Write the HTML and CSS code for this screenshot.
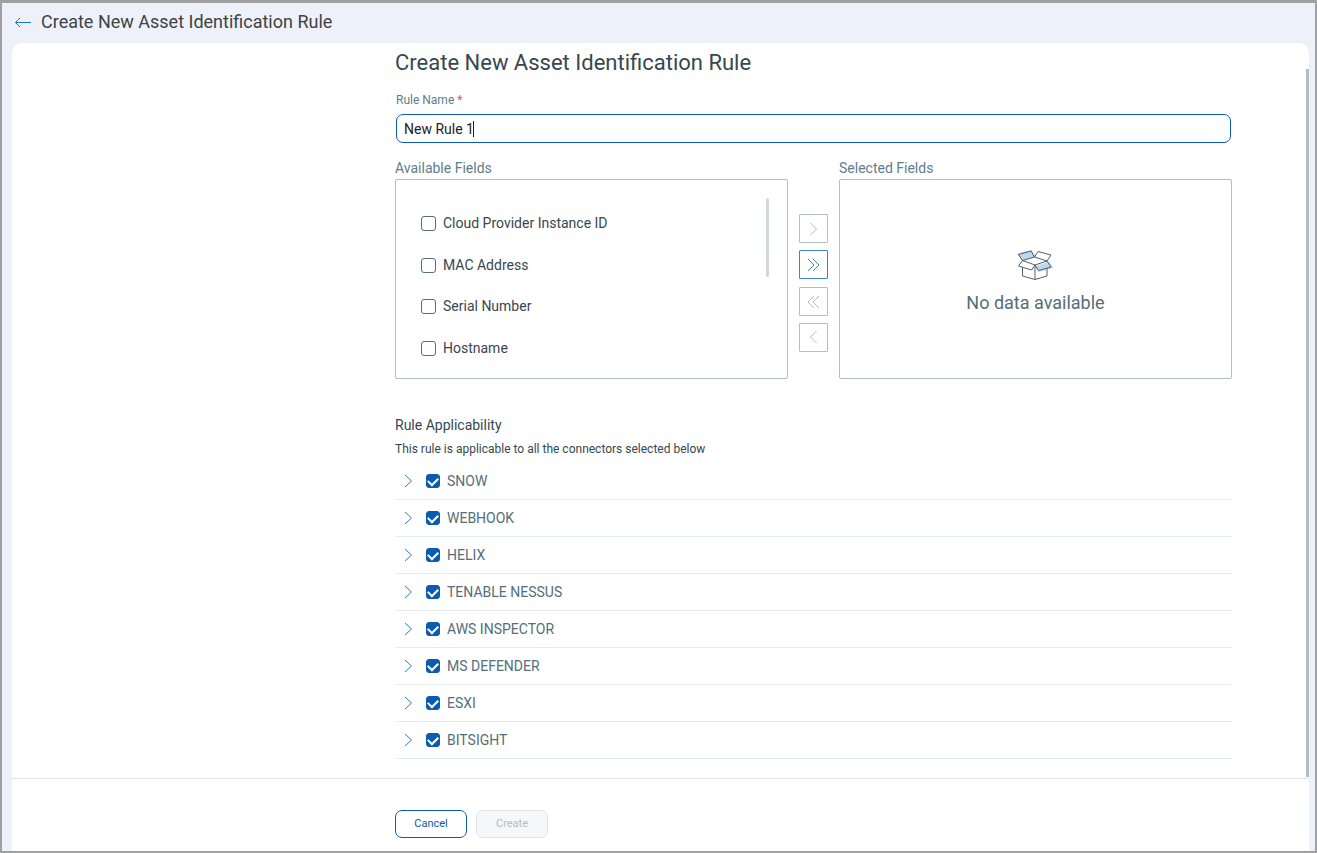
FILE: index.html
```html
<!DOCTYPE html>
<html lang="en">
<head>
<meta charset="utf-8">
<title>Create New Asset Identification Rule</title>
<link rel="stylesheet" href="styles.css">
</head>
<body>
<div class="app">
  <header class="topbar">
    <a class="back" href="#" aria-label="Back"><svg width="18" height="12" viewBox="0 0 18 12"><path d="M17 6.500H1.500M6 2L1.500 6.500 6 11"/></svg></a>
    <span class="topbar-title">Create New Asset Identification Rule</span>
  </header>
  <form class="panel">
    <div class="scroll">
      <div class="content">
        <h1 class="title">Create New Asset Identification Rule</h1>
        <label class="name-label" for="name">Rule Name <span class="required">*</span></label>
        <div class="name-box">
          <input class="name-input" id="name" type="text" value="New Rule 1">
          <span class="caret"></span>
        </div>
        <div class="transfer">
          <section class="picker">
            <h2 class="picker-title">Available Fields</h2>
            <div class="picker-box available">
              <div class="field-list">
                <label class="field"><input class="check" type="checkbox">Cloud Provider Instance ID</label>
                <label class="field"><input class="check" type="checkbox">MAC Address</label>
                <label class="field"><input class="check" type="checkbox">Serial Number</label>
                <label class="field"><input class="check" type="checkbox">Hostname</label>
              </div>
              <div class="list-thumb"></div>
            </div>
          </section>
          <div class="moves">
            <button class="move" type="button" disabled aria-label="Add"><svg width="15" height="15" viewBox="0 0 15 15"><path d="M4.500 2l6 6-6 6"/></svg></button>
            <button class="move move-on" type="button" aria-label="Add all"><svg width="15" height="15" viewBox="0 0 15 15"><path d="M2 2l6 6-6 6M7 2l6 6-6 6"/></svg></button>
            <button class="move" type="button" disabled aria-label="Remove all"><svg width="15" height="15" viewBox="0 0 15 15"><path d="M8 2L2 8l6 6M13 2L7 8l6 6"/></svg></button>
            <button class="move" type="button" disabled aria-label="Remove"><svg width="15" height="15" viewBox="0 0 15 15"><path d="M10.500 1l-6 6 6 6"/></svg></button>
          </div>
          <section class="picker">
            <h2 class="picker-title">Selected Fields</h2>
            <div class="picker-box empty">
              <svg class="box-icon" width="38" height="32" viewBox="0 0 38 32">
                <path class="tint" d="M0 4.500L14.500 1l4.500 7-13.500 4zM18 17.500l14-5L36.500 19l-15 4z"/>
                <path d="M1.500 5.500L14 2l3.500 6-12 3.500zM17.500 8L21 2.500l13 3.500-4 6zM5.500 11.500l12.500 4.500-3.500 5L1.500 17zM30 12l-12 4 3.500 5.500L34 18zM5.500 18.500v8.500L18 30.500 30 27v-7.500M18 16v14.500"/>
              </svg>
              <p class="empty-text">No data available</p>
            </div>
          </section>
        </div>
        <section class="rules">
          <h2 class="rules-title">Rule Applicability</h2>
          <p class="rules-note">This rule is applicable to all the connectors selected below</p>
          <ul class="connectors">
            <li class="connector"><button class="expand" type="button" aria-label="Expand SNOW"><svg width="9" height="14" viewBox="0 0 9 14"><path d="M1 1l6.500 6L1 13"/></svg></button><label class="connector-name"><input class="check" type="checkbox" checked>SNOW</label></li>
            <li class="connector"><button class="expand" type="button" aria-label="Expand WEBHOOK"><svg width="9" height="14" viewBox="0 0 9 14"><path d="M1 1l6.500 6L1 13"/></svg></button><label class="connector-name"><input class="check" type="checkbox" checked>WEBHOOK</label></li>
            <li class="connector"><button class="expand" type="button" aria-label="Expand HELIX"><svg width="9" height="14" viewBox="0 0 9 14"><path d="M1 1l6.500 6L1 13"/></svg></button><label class="connector-name"><input class="check" type="checkbox" checked>HELIX</label></li>
            <li class="connector"><button class="expand" type="button" aria-label="Expand TENABLE NESSUS"><svg width="9" height="14" viewBox="0 0 9 14"><path d="M1 1l6.500 6L1 13"/></svg></button><label class="connector-name"><input class="check" type="checkbox" checked>TENABLE NESSUS</label></li>
            <li class="connector"><button class="expand" type="button" aria-label="Expand AWS INSPECTOR"><svg width="9" height="14" viewBox="0 0 9 14"><path d="M1 1l6.500 6L1 13"/></svg></button><label class="connector-name"><input class="check" type="checkbox" checked>AWS INSPECTOR</label></li>
            <li class="connector"><button class="expand" type="button" aria-label="Expand MS DEFENDER"><svg width="9" height="14" viewBox="0 0 9 14"><path d="M1 1l6.500 6L1 13"/></svg></button><label class="connector-name"><input class="check" type="checkbox" checked>MS DEFENDER</label></li>
            <li class="connector"><button class="expand" type="button" aria-label="Expand ESXI"><svg width="9" height="14" viewBox="0 0 9 14"><path d="M1 1l6.500 6L1 13"/></svg></button><label class="connector-name"><input class="check" type="checkbox" checked>ESXI</label></li>
            <li class="connector"><button class="expand" type="button" aria-label="Expand BITSIGHT"><svg width="9" height="14" viewBox="0 0 9 14"><path d="M1 1l6.500 6L1 13"/></svg></button><label class="connector-name"><input class="check" type="checkbox" checked>BITSIGHT</label></li>
          </ul>
        </section>
      </div>
      <div class="page-thumb"></div>
    </div>
    <footer class="actions">
      <button class="btn btn-cancel" type="button">Cancel</button>
      <button class="btn btn-create" type="submit" disabled>Create</button>
    </footer>
  </form>
</div>
</body>
</html>
```

FILE: styles.css
```css
* {
  box-sizing: border-box;
}

body,
h1,
h2,
p,
ul {
  margin: 0;
  padding: 0;
  font-weight: 400;
}

body {
  font-family: Roboto, "Liberation Sans", sans-serif;
  color: #37474f;
}

svg {
  display: block;
  fill: none;
  stroke: currentColor;
}

button,
input {
  font-family: inherit;
}

.app {
  display: flex;
  flex-direction: column;
  min-height: 100vh;
  padding: 0 6px 0 10px;
  background: #edf2fa;
  border: 2px solid #a0a0a0;
  border-top-width: 3px;
}

.topbar {
  display: flex;
  align-items: center;
  gap: 9px;
  height: 40px;
  padding: 0 2px 2px;
}

.back {
  color: #1a73c7;
}

.topbar-title {
  font-size: 18px;
  line-height: 24px;
  color: #424242;
}

.panel {
  display: flex;
  flex: 1;
  flex-direction: column;
  background: #fff;
  border-radius: 10px 10px 0 0;
}

.scroll {
  position: relative;
  padding: 6px 77px 19px 383px;
  border-bottom: 1px solid #dbe6f3;
}

.page-thumb {
  position: absolute;
  top: 26px;
  right: 0;
  bottom: 1px;
  width: 3px;
  background: #b0bec5;
}

.title {
  font-size: 22px;
  line-height: 28px;
}

.name-label {
  display: block;
  padding: 15px 1px 6px;
  font-size: 12px;
  line-height: 16px;
  color: #607d8b;
}

.required {
  color: #f4511e;
}

.name-box {
  display: flex;
  position: relative;
  padding: 0 1px;
}

.name-input {
  width: 100%;
  height: 29px;
  padding: 0 7px;
  font-size: 14px;
  color: #212121;
  background: #fff;
  border: 1px solid #0b5cb0;
  border-radius: 7px;
  outline: 0;
}

.caret {
  position: absolute;
  top: 7px;
  left: 78px;
  width: 1px;
  height: 16px;
  background: #212121;
}

.transfer {
  display: grid;
  grid-template-columns: 1fr 29px 1fr;
  gap: 11px;
  padding-top: 15px;
}

.picker-title {
  padding-bottom: 1px;
  font-size: 14px;
  line-height: 20px;
  color: #607d8b;
}

.picker-box {
  display: flex;
  height: 200px;
  border: 1px solid #b0bec5;
  border-radius: 2px;
}

.available {
  justify-content: space-between;
  padding: 18px 18px 0 25px;
}

.field-list {
  display: flex;
  flex-direction: column;
  justify-content: space-between;
  height: 142px;
  margin-top: 17px;
}

.field {
  display: flex;
  align-items: center;
  gap: 7px;
  font-size: 14px;
  line-height: 17px;
}

.list-thumb {
  width: 3px;
  height: 79px;
  background: #cfd8dc;
  border-radius: 2px;
}

.check {
  width: 15px;
  height: 15px;
  margin: 0;
  appearance: none;
  background: #fff;
  border: 1px solid #546e7a;
  border-radius: 3px;
}

.check:checked {
  display: grid;
  justify-content: center;
  align-content: start;
  width: 14px;
  height: 14px;
  padding-top: 2px;
  background: #0b5cb0;
  border-color: #0b5cb0;
}

.check:checked::after {
  width: 8px;
  height: 5px;
  content: "";
  border: solid #fff;
  border-width: 0 0 2px 2px;
  transform: rotate(-45deg);
}

.moves {
  display: flex;
  flex-direction: column;
  justify-content: space-between;
  height: 138px;
  margin-top: 56px;
}

.move {
  display: grid;
  place-items: center;
  width: 29px;
  height: 29px;
  padding: 0;
  color: #b0bec5;
  background: #fff;
  border: 1px solid #b0bec5;
  border-radius: 1px;
}

.move-on {
  color: #3f83c8;
  border-color: #3f83c8;
}

.empty {
  flex-direction: column;
  align-items: center;
  padding-top: 69px;
}

.box-icon {
  color: #546068;
}

.tint {
  fill: #c0d7f0;
  stroke: none;
}

.empty-text {
  padding-top: 10px;
  font-size: 18px;
  line-height: 24px;
  color: #546e7a;
}

.rules {
  padding-top: 36px;
}

.rules-title {
  font-size: 14px;
  line-height: 20px;
}

.rules-note {
  padding: 6px 0;
  font-size: 12px;
  line-height: 16px;
}

.connectors {
  list-style: none;
}

.connector {
  display: flex;
  align-items: center;
  gap: 13px;
  height: 37px;
  padding-left: 9px;
  border-bottom: 1px solid #e6eced;
}

.expand {
  padding: 0;
  color: #2f78c2;
  background: none;
  border: 0;
}

.connector-name {
  display: flex;
  align-items: center;
  gap: 7px;
  font-size: 14px;
  line-height: 18px;
  color: #546e7a;
}

.actions {
  display: flex;
  gap: 9px;
  padding: 31px 77px 13px 383px;
}

.btn {
  width: 72px;
  height: 28px;
  padding: 0 0 2px;
  font-size: 11px;
  background: #fff;
  border: 1px solid #0b5cb0;
  border-radius: 7px;
}

.btn-cancel {
  color: #0b5cb0;
}

.btn-create {
  color: #b0bec5;
  background: #f5f7f9;
  border-color: #e0e5e9;
}
```
